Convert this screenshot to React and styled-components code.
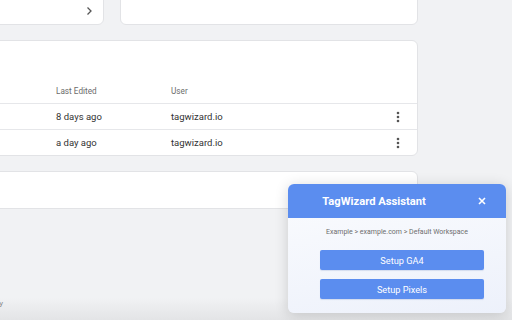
import styled, { createGlobalStyle } from 'styled-components'

const GlobalStyle = createGlobalStyle`
  body {
    margin: 0;
    background: #f1f2f4;
    font-family: Roboto, 'Liberation Sans', sans-serif;
    overflow: hidden;
  }
  * { box-sizing: border-box; }
`

const Page = styled.div`
  position: relative;
  width: 512px;
  height: 320px;
  overflow: hidden;
  display: flex;
  flex-direction: column;
`

const Main = styled.main`
  margin-left: -200px;
  margin-top: -35px;
  width: 618px;
  display: flex;
  flex-direction: column;
  gap: 15px;
`

const TopRow = styled.div`
  display: grid;
  grid-template-columns: 304px 1fr;
  gap: 16px;
`

const Card = styled.section`
  background: #fff;
  border: 1px solid #e2e3e6;
  border-radius: 6px;
  height: ${p => p.$h || 'auto'};
`

const LinkCard = styled(Card)`
  display: flex;
  align-items: flex-end;
  justify-content: flex-end;
  padding: 0 10px 8px 0;
  color: #555;
`

const TableHead = styled.div`
  height: 37px;
`

const Row = styled.div`
  display: grid;
  grid-template-columns: 239px 115px 1fr 22px;
  align-items: center;
  height: ${p => (p.$head ? '25px' : '26px')};
  padding: 0 8px 0 16px;
  border-top: ${p => (p.$head ? 'none' : '1px solid #e6e7ea')};
  font-size: ${p => (p.$head ? '8.2px' : '9.5px')};
  color: ${p => (p.$head ? '#6b6b6b' : '#333')};
  padding-top: ${p => (p.$head ? '1px' : '0')};
`

const MoreButton = styled.button`
  border: 0;
  background: none;
  padding: 0;
  display: flex;
  justify-content: center;
  color: #555;
`

const Footer = styled.footer`
  margin-top: auto;
  height: 22px;
  margin-left: -200px;
  display: flex;
  align-items: flex-start;
  background: linear-gradient(#f1f2f4, #e3e4e6);
`

const FooterText = styled.span`
  width: 203px;
  text-align: right;
  font-size: 8px;
  color: #8a8a8a;
  padding-top: 1px;
`

const Assistant = styled.aside`
  position: absolute;
  right: 6px;
  bottom: 7px;
  width: 218px;
  height: 129px;
  border-radius: 6px;
  overflow: hidden;
  background: linear-gradient(170deg, #fbfcfe, #edf1fb);
  box-shadow: 0 2px 14px rgba(0, 0, 0, 0.16);
  display: flex;
  flex-direction: column;
`

const AssistantHeader = styled.header`
  height: 34px;
  background: #5b8def;
  display: flex;
  align-items: center;
  padding-left: 2px;
`

const AssistantTitle = styled.h2`
  flex: 1;
  margin: 0;
  text-align: center;
  color: #fff;
  font-size: 11.2px;
  font-weight: 700;
`

const CloseButton = styled.button`
  width: 48px;
  height: 34px;
  border: 0;
  background: none;
  color: #fff;
  display: flex;
  align-items: center;
  justify-content: center;
  padding: 0;
`

const AssistantBody = styled.div`
  flex: 1;
  display: flex;
  flex-direction: column;
  align-items: center;
  padding-top: 10px;
`

const Breadcrumb = styled.p`
  margin: 0 0 14px;
  font-size: 7px;
  color: #6d6d6d;
`

const Actions = styled.div`
  display: flex;
  flex-direction: column;
  gap: 9px;
  padding-left: 10px;
`

const ActionButton = styled.button`
  width: 164px;
  height: 20px;
  border: 0;
  border-radius: 2px;
  background: #5b8def;
  color: #fff;
  font-family: Roboto, 'Liberation Sans', sans-serif;
  font-size: 9.2px;
  padding: 0;
  box-shadow: 0 1px 1px rgba(40, 80, 160, 0.15);
`

const Chevron = () => (
  <svg width='8' height='10' viewBox='0 0 8 10' fill='none' stroke='currentColor' strokeWidth='1.3'>
    <path d='M2.5 1.5 L6 5 L2.5 8.5' />
  </svg>
)

const Dots = () => (
  <svg width='4' height='12' viewBox='0 0 4 12' fill='#555'>
    <circle cx='2' cy='2' r='1.3' />
    <circle cx='2' cy='6' r='1.3' />
    <circle cx='2' cy='10' r='1.3' />
  </svg>
)

const rows = [
  { id: 1, edited: '8 days ago', user: 'tagwizard.io' },
  { id: 2, edited: 'a day ago', user: 'tagwizard.io' },
]

const App = () => {
  return (
    <Page>
      <GlobalStyle />
      <Main>
        <TopRow>
          <LinkCard $h='60px'><Chevron /></LinkCard>
          <Card $h='60px' />
        </TopRow>
        <Card>
          <TableHead />
          <Row $head>
            <span />
            <span>Last Edited</span>
            <span>User</span>
            <span />
          </Row>
          {rows.map(r => (
            <Row key={r.id}>
              <span />
              <span>{r.edited}</span>
              <span>{r.user}</span>
              <MoreButton><Dots /></MoreButton>
            </Row>
          ))}
        </Card>
        <Card $h='38px' />
      </Main>
      <Footer>
        <FooterText>Privacy</FooterText>
      </Footer>
      <Assistant>
        <AssistantHeader>
          <AssistantTitle>TagWizard Assistant</AssistantTitle>
          <CloseButton>
            <svg width='8' height='8' viewBox='0 0 8 8' stroke='#fff' strokeWidth='1.6'>
              <path d='M1 1 L7 7 M7 1 L1 7' />
            </svg>
          </CloseButton>
        </AssistantHeader>
        <AssistantBody>
          <Breadcrumb>Example &gt; example.com &gt; Default Workspace</Breadcrumb>
          <Actions>
            <ActionButton>Setup GA4</ActionButton>
            <ActionButton>Setup Pixels</ActionButton>
          </Actions>
        </AssistantBody>
      </Assistant>
    </Page>
  )
}

export default App
